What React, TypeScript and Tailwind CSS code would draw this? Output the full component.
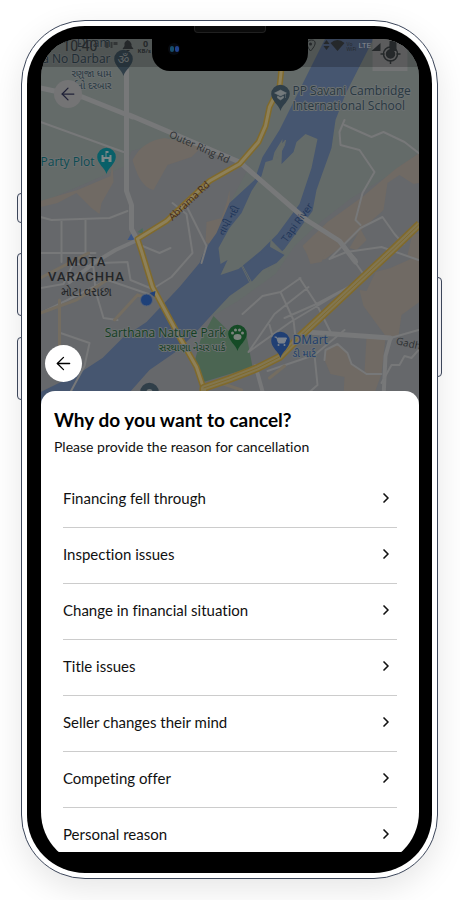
import React from "react";
import { ArrowLeft, ChevronRight } from "lucide-react";

const reasons = [
  "Financing fell through",
  "Inspection issues",
  "Change in financial situation",
  "Title issues",
  "Seller changes their mind",
  "Competing offer",
  "Personal reason",
];

const mapFont = "font-['Open_Sans','Noto_Sans','Noto_Sans_Gujarati',sans-serif]";

function Pin({ x, y, color, children }: { x: number; y: number; color: string; children?: React.ReactNode }) {
  return (
    <g transform={`translate(${x} ${y})`}>
      <path d="M0 17C-1.500 11-9 7-9.300 0A9.300 9.300 0 1 1 9.300 0C9 7 1.500 11 0 17Z" fill={color} />
      {children}
    </g>
  );
}

function CityMap() {
  return (
    <svg
      viewBox="41 39 379 366"
      preserveAspectRatio="xMidYMin slice"
      className={`block h-full w-full ${mapFont}`}
      role="img"
      aria-label="Map"
    >
      <rect x="0" y="0" width="460" height="420" fill="#66686b" />
      <path d="M41 39H420V152L395 172 352 198 322 221 295 246 276 274 240 300 213 316 205 303 213 270 232 200 250 166 225 152 165 141 132 151 126 166 41 203Z" fill="#646b69" />
      <path d="M133 160C140 147 150 140 165 138L203 146 192 157 168 165 154 190C142 187 137 173 133 160Z" fill="#706a64" />
      <path d="M41 201 78 190 111 176 113 161 114 182 102 203 100 214 92 208 77 193 58 203 41 207Z" fill="#706a64" />
      <path d="M420 153 396 169 364 196 328 222 303 246 312 262 326 259 353 238 384 210 388 183 400 175 414 184 420 183Z" fill="#706a64" />
      <path d="M350 248 361 229 367 240 357 250ZM306 250H327L322 262 311 264ZM413 234H420V262L408 255ZM391 268 420 255V302L402 315 399 336H386L364 306 360 290 367 291 376 272ZM367 338H386L382 374 374 396H344L345 377 331 374 325 360 326 350 338 344 348 353 352 364 365 372Z" fill="#706a64" />
      <path d="M207 222 222 218 227 203 230 190V235L216 246 206 242Z" fill="#706a64" />
      <path d="M41 392 82 372 90 382 92 398H41Z" fill="#706a64" />

      <path d="M330 30 280 130 263 157 255 180 230 203 217 233 205 250 200 263 180 287 147 322 123 338 103 358 80 373 41 392V406H118L150 370 176 352 193 336 213 314 230 296 250 282 285 249 313 211 317 190 323 173 332 148 336 120 346 94 374 39V30Z" fill="#465670" />
      <path d="M283 139 275 152 273 160 266 162 262 176 252 191 242 213 230 228 219 248 221 264 228 260 221 275 239 269 261 251 278 234 300 204 312 168 318 139 306 134 297 142 294 152 282 164Z" fill="#646b69" />
      <path d="M286 140 276 152 278 159 285 145ZM269 272 285 254 271 240M250 282 241 264" fill="#646b69" stroke="#646b69" strokeWidth="1" />
      <path d="M269 246 285 255 277 263 263 270 252 282 244 267Z" fill="#465670" />
      <path d="M270 239 283 253M241 262 252 282" stroke="#646b69" strokeWidth="1" />
      <path d="M214 316 230 332 247 335 253 367 204 382 195 362 201 340Z" fill="#4b6552" />
      <path d="M128 240 134 230 139 240Z" fill="#3b5687" />
      <path d="M138 232 143 228 144 234Z" fill="#4d6d60" />

      <g fill="none" stroke="#777879" strokeLinecap="round" strokeLinejoin="round">
        <path strokeWidth="5" d="M41 88 83 97 133 117M130 115 240 162 307 220 340 241 356 262M127 70V118L127 191 132 205V229L138 240M306 332 391 338" />
        <path strokeWidth="4" d="M138 240 116 250 96 262 70 282M391 338 386 356 384 398M256 366 264 395" />
        <path strokeWidth="2" d="M41 122 124 152M41 217 52 220 110 218 128 211M62 220V262M86 220V252M41 253H96M41 288 64 284 74 263 94 267 96 291 104 318 118 320M41 313 68 300 108 280 149 294M90 256 101 263 128 262 131 280 153 289M61 333 90 343 85 366 71 392M153 289 172 277 193 253 187 214 173 203M143 246 160 253 171 248M185 202 207 246 202 263M345 120 340 132 341 145 360 150 375 172 363 193 356 220 361 225M345 125 372 137 384 132 405 142 419 153M330 259 361 228 383 217 395 234 404 244M330 259 347 252 382 247 419 260M340 241 357 260M347 250 366 277 291 322 249 352M300 278 317 304 331 332M317 304 366 278M243 314 263 296 281 292 301 278M281 292 294 320 296 338M249 352 275 314 309 287M317 304 285 318M270 325 276 347M268 371 315 355 318 385 302 399M315 355 345 330M391 338 419 330M325 360 326 350 338 344 348 353 352 364 367 374H382M382 383 392 365 400 365 405 356 412 358 419 350" />
      </g>
      <g fill="none" stroke="#746d61" strokeWidth="3" strokeLinecap="round">
        <path d="M41 278 89 253M41 313 77 300 112 277M60 300V350M115 320 138 295 150 299M224 384 242 390M270 378 285 366" />
      </g>
      <g fill="none" strokeLinejoin="round">
        <path d="M282 68 280 87 270 107 266 126 259 142 240 164 210 181 167 221 138 239 142 251 153 287 180 337 197 367 204 388" stroke="#806a2c" strokeWidth="6" />
        <path d="M282 68 280 87 270 107 266 126 259 142 240 164 210 181 167 221 138 239 142 251 153 287 180 337 197 367 204 388" stroke="#8d8059" strokeWidth="3" />
        <path d="M204 398V388L230 379 258 368 280 357 302 335 394 249 420 224" stroke="#806a2c" strokeWidth="8" />
        <path d="M204 398V388L230 379 258 368 280 357 302 335 394 249 420 224" stroke="#82764f" strokeWidth="5" />
        <path d="M204 388 230 379 258 368 280 357 302 335 394 249 420 224" stroke="#806a2c" strokeWidth="1" />
      </g>

      <g fill="#2d3032" fontSize="10">
        <text x="169" y="137" transform="rotate(24 169 137)">Outer Ring Rd</text>
        <text x="173" y="221" fill="#42281d" transform="rotate(-43 173 221)">Abrama Rd</text>
        <text x="287" y="243" fill="#1f3558" transform="rotate(-54 287 243)">Tapi River</text>
        <text x="224" y="236" fill="#1f3558" transform="rotate(-60 224 236)">તાપી નદી</text>
        <text x="396" y="344" transform="rotate(13 396 344)">Gadhp</text>
      </g>
      <g fill="#242628" fontSize="13" letterSpacing="1" textAnchor="middle" className="font-[Roboto,sans-serif] font-medium">
        <text x="87" y="266">MOTA</text>
        <text x="87" y="281">VARACHHA</text>
        <text x="87" y="296" fontSize="12" letterSpacing="0" fontWeight="400">મોટા વરાછા</text>
      </g>
      <g fontSize="12" fill="#293842" stroke="#6b7071" strokeWidth="2" paintOrder="stroke" strokeLinejoin="round">
        <text x="293" y="95">PP Savani Cambridge</text>
        <text x="293" y="110">International School</text>
        <text x="111" y="47" textAnchor="end">Dham</text>
        <text x="111" y="63" textAnchor="end">a No Darbar</text>
        <text x="112" y="77" fontSize="10" textAnchor="end">રણુજા ધામ</text>
        <text x="112" y="89" fontSize="10" textAnchor="end">દુર્ગાનો દરબાર</text>
        <text x="95" y="166" fill="#0c4b51" textAnchor="end">Party Plot</text>
        <text x="226" y="337" fill="#153f23" textAnchor="end">Sarthana Nature Park</text>
        <text x="226" y="351" fill="#153f23" fontSize="10" textAnchor="end">સરથાણા નેચર પાર્ક</text>
        <text x="293" y="344" fill="#203d6d">DMart</text>
        <text x="293" y="357" fill="#203d6d" fontSize="10">ડી માર્ટ</text>
      </g>

      <Pin x={281} y={94} color="#303f49">
        <path d="M-6-1 0-4 6-1 0 2ZM-3 2V4L0 6 3 4V2L0 3.500ZM5-1V4" fill="#747a7c" stroke="#747a7c" strokeWidth=".5" />
      </Pin>
      <Pin x={124} y={59} color="#303f49">
        <text y="5" fontSize="13" textAnchor="middle" fill="#747a7c">ॐ</text>
      </Pin>
      <Pin x={107} y={157} color="#096069">
        <path d="M-5 5V-2H-3V0H-1V-6H2V-4H0V0H3V-2H5V5H2V2H-2V5Z" fill="#7d8889" />
      </Pin>
      <Pin x={238} y={334} color="#154b26">
        <g fill="#7b837d">
          <ellipse cx="0" cy="3" rx="4" ry="3" />
          <circle cx="-5" cy="-1" r="1.500" />
          <circle cx="-2" cy="-4" r="1.500" />
          <circle cx="2" cy="-4" r="1.500" />
          <circle cx="5" cy="-1" r="1.500" />
        </g>
      </Pin>
      <Pin x={281} y={341} color="#203f74">
        <path d="M-6-4H-4L-2 2H4L6-3H-3" fill="#7b828c" stroke="#7b828c" />
        <circle cx="-2" cy="4" r="1" fill="#7b828c" />
        <circle cx="4" cy="4" r="1" fill="#7b828c" />
      </Pin>
      <Pin x={150} y={392} color="#303f49">
        <circle r="3" fill="#6f7577" />
      </Pin>
      <circle cx="147" cy="300" r="6" fill="#1f4179" stroke="#566277" strokeWidth="1" />
      <path d="M150 293 156 291 155 297Z" fill="#1f4179" />

      <rect x="373" y="39" width="35" height="32" fill="#737475" />
      <rect x="41" y="39" width="379" height="28" fill="#000" opacity=".2" />
      <g fill="none" stroke="#25282a" strokeWidth="1.500">
        <circle cx="391" cy="54" r="7" />
        <path d="M391 44V48M391 60V64M381 54H385M397 54H401" />
        <circle cx="391" cy="54" r="4" fill="#25282a" />
      </g>
      <g fill="#25282a">
        <text x="63" y="51" fontSize="14" className="font-[Roboto,sans-serif]">10:40</text>
        <path d="M106 42H109V48H106ZM111 42H113V48H111ZM114 42H118V45H114Z" opacity=".7" />
        <path d="M123 49 125 46V43Q126 41 128 40Q131 41 132 44V46L134 49ZM127 50H130V51H127Z" />
        <text x="146" y="47" fontSize="9" fontWeight="bold" textAnchor="middle">0</text>
        <text x="138" y="53" fontSize="6" fontWeight="bold">KB/s</text>
        <path d="M312 40C317 40 317 45 311 51 306 45 307 40 312 40Z" fill="none" stroke="#25282a" />
        <circle cx="311" cy="44" r="1.500" />
        <path d="M324 44 327 40 330 44ZM324 46H330L327 50ZM331 43Q338 37 345 43L338 51ZM372 51 381 43V51ZM390 41H397V51H390Z" />
        <text x="347" y="46" fontSize="5">Vo</text>
        <text x="347" y="51" fontSize="5">WiFi</text>
        <text x="359" y="48" fontSize="8" fill="#85898e" className="font-[Roboto,sans-serif]">LTE</text>
      </g>
    </svg>
  );
}

function PhoneNotch() {
  return (
    <div className="absolute inset-x-0 top-0 flex justify-center" aria-hidden="true">
      <div className="relative h-8 w-[156px] rounded-b-[18px] bg-black">
        <span className="absolute left-4 top-1 flex h-3 w-3 items-center justify-center gap-px rounded-full bg-[#070a10]">
          <i className="h-1.5 w-1 rounded-full bg-[#164d6d]" />
          <i className="h-1.5 w-1 rounded-full bg-[#20428d]" />
        </span>
      </div>
    </div>
  );
}

function SideKeys() {
  const key = "absolute w-[5px] border border-[#3c465a] bg-[#eeedf0]";
  return (
    <div aria-hidden="true">
      <i className={`${key} -left-[5px] top-[172px] h-[30px] rounded-l-sm`} />
      <i className={`${key} -left-[5px] top-[232px] h-[63px] rounded-l-sm`} />
      <i className={`${key} -left-[5px] top-[316px] h-[63px] rounded-l-sm`} />
      <i className={`${key} -right-[5px] top-[256px] h-[100px] rounded-r-sm`} />
    </div>
  );
}

export default function App() {
  return (
    <main className="min-h-[900px] overflow-hidden bg-white pt-5 pr-[22px] pl-[21px] font-[Lato,'Open_Sans',sans-serif] text-[#111111] [font-variant-ligatures:none]">
      <div className="relative mx-auto w-full max-w-[480px] rounded-[64px] border border-[#3c465a] bg-white p-[5px] shadow-[0_10px_32px_rgba(0,0,0,0.10)]">
        <SideKeys />
        <div className="rounded-[58px] bg-black pr-[13px] pb-[7px] pl-[14px]">
          <div className="flex h-[13px] justify-center">
            <span className="h-[7px] w-[72px] rounded-b-sm border border-t-0 border-[#202020] bg-[#0b0b0b]" />
          </div>
          <div className="relative overflow-hidden rounded-t-[38px] rounded-b-[54px] bg-black">
            <div className="relative h-[366px]">
              <CityMap />
              <button aria-label="Back to map" className="absolute top-[41px] left-[13px] flex h-7 w-7 items-center justify-center rounded-full bg-[#747475] text-[#202238]">
                <ArrowLeft size={20} strokeWidth={1.5} />
              </button>
              <button aria-label="Go back" className="absolute top-[306px] left-1 flex h-[37px] w-[37px] items-center justify-center rounded-full bg-white text-black">
                <ArrowLeft size={21} strokeWidth={1.5} />
              </button>
            </div>
            <PhoneNotch />
            <section className="relative -mt-[14px] rounded-t-[14px] bg-white px-[13px] pt-[15px]">
              <h1 className="text-[19px] leading-7 font-bold text-black">Why do you want to cancel?</h1>
              <p className="mt-[3px] text-[14px] leading-5">Please provide the reason for cancellation</p>
              <ul className="mx-[9px] mt-[15px]">
                {reasons.map((reason) => (
                  <li key={reason} className="border-b border-[#cccccc] last:border-b-0 last:[&>button]:pb-2">
                    <button className="flex w-full items-center justify-between pt-4 pr-[3px] pb-[19px] text-left text-[15px] leading-5">
                      <span>{reason}</span>
                      <ChevronRight size={16} strokeWidth={2.5} />
                    </button>
                  </li>
                ))}
              </ul>
            </section>
            <div className="h-[14px] bg-black" />
          </div>
        </div>
      </div>
    </main>
  );
}
